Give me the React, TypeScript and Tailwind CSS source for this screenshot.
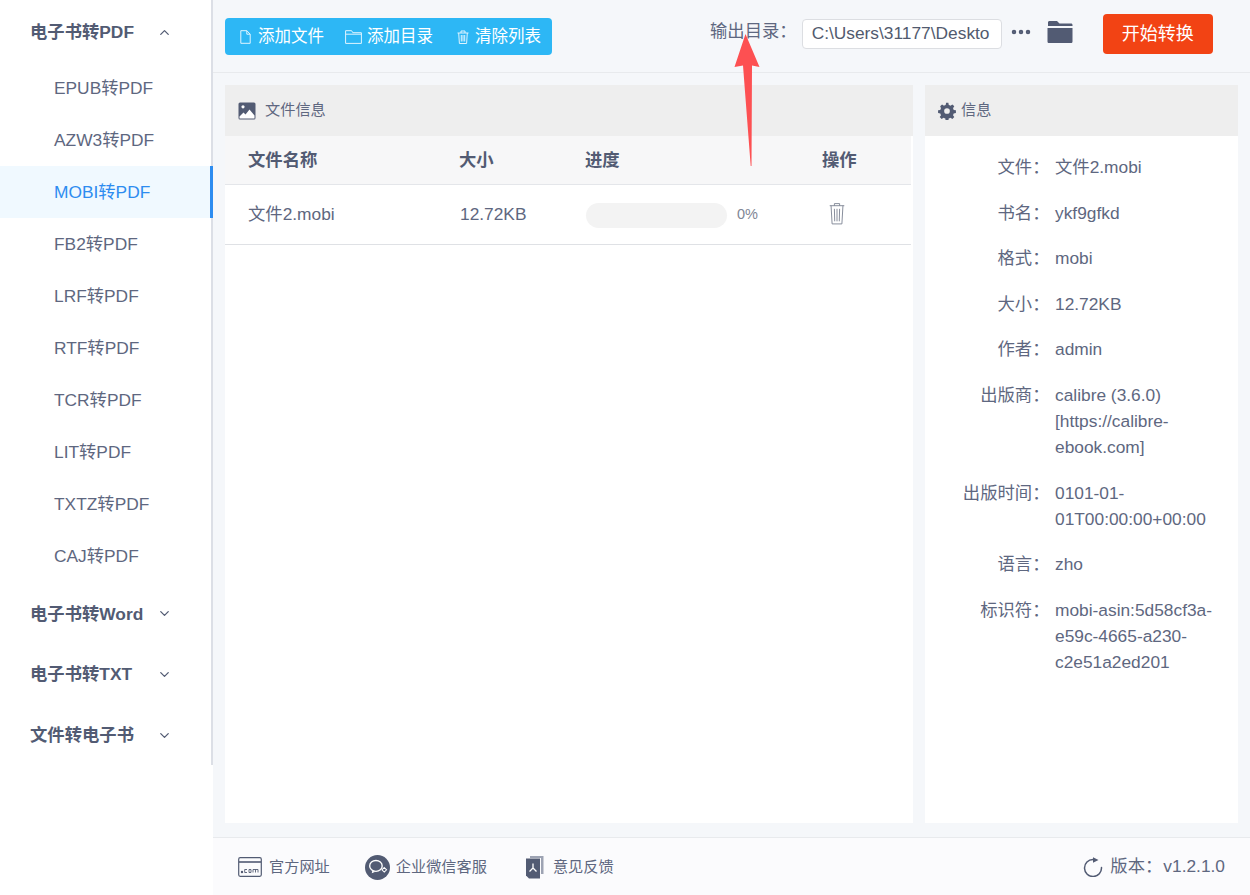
import { ChevronDown, ChevronUp, MoreHorizontal } from 'lucide-react';

const FONT = "font-['Liberation_Sans','Noto_Sans_CJK_SC',sans-serif]";

const subItems = ['EPUB转PDF', 'AZW3转PDF', 'MOBI转PDF', 'FB2转PDF', 'LRF转PDF', 'RTF转PDF', 'TCR转PDF', 'LIT转PDF', 'TXTZ转PDF', 'CAJ转PDF'];

const infoRows = [
  { label: '文件\uFF1A', value: '文件2.mobi', h: 'h-[45.6px]' },
  { label: '书名\uFF1A', value: 'ykf9gfkd', h: 'h-[45.6px]' },
  { label: '格式\uFF1A', value: 'mobi', h: 'h-[45.6px]' },
  { label: '大小\uFF1A', value: '12.72KB', h: 'h-[45.6px]' },
  { label: '作者\uFF1A', value: 'admin', h: 'h-[45.6px]' },
  { label: '出版商\uFF1A', value: 'calibre (3.6.0) [https://calibre-ebook.com]', h: 'h-[97.6px]' },
  { label: '出版时间\uFF1A', value: '0101-01-01T00:00:00+00:00', h: 'h-[71.6px]' },
  { label: '语言\uFF1A', value: 'zho', h: 'h-[45.6px]' },
  { label: '标识符\uFF1A', value: 'mobi-asin:5d58cf3a-e59c-4665-a230-c2e51a2ed201', h: 'h-[97.6px]' },
];

function MenuTitle({ text, open }: { text: string; open?: boolean }) {
  return (
    <div className="flex h-[61px] items-center pl-[30px] pt-[3px] text-[17.33px] font-bold text-[#525b73]">
      <span className="w-[127px] whitespace-nowrap">{text}</span>
      {open ? <ChevronUp className="h-[15px] w-[15px]" /> : <ChevronDown className="-mt-[2px] h-[15px] w-[15px]" />}
    </div>
  );
}

function Sidebar() {
  return (
    <aside className="flex h-[765px] w-[213px] shrink-0 flex-col border-r-2 border-[#dcdfe6] bg-white pt-[1px]">
      <MenuTitle text="电子书转PDF" open />
      <div className="mb-[1px] flex flex-col">
        {subItems.map((item) => {
          const active = item === 'MOBI转PDF';
          return (
            <div
              key={item}
              className={
                active
                  ? 'flex h-[52px] items-center border-r-[3px] border-[#2d8cf0] bg-[#f0f9ff] pl-[54px] pt-[2px] -mr-[2px] text-[17.33px] text-[#2d8cf0]'
                  : 'flex h-[52px] items-center pl-[54px] pt-[2px] text-[17.33px] text-[#5e6780]'
              }
            >
              {item}
            </div>
          );
        })}
      </div>
      <MenuTitle text="电子书转Word" />
      <MenuTitle text="电子书转TXT" />
      <MenuTitle text="文件转电子书" />
    </aside>
  );
}

function Toolbar() {
  return (
    <div className="flex h-[73px] shrink-0 items-center border-b border-[#e8eaed] pl-[12px]">
      <div className="flex h-[37px] w-[327px] items-center rounded-[4px] bg-[#2db7f5] pl-[15px] pt-[1px] text-[16.5px] text-white">
        <svg viewBox="0 0 11 14" className="mr-[7px] h-[14px] w-[11px]" fill="none" stroke="#dff4ff" strokeWidth="1">
          <path d="M.8.7h6l3.400 3.500v9.100H.800zM6.800.7v3.500h3.400" />
        </svg>
        <span>添加文件</span>
        <svg viewBox="0 0 17 14" className="ml-[21px] mr-[5px] h-[14px] w-[17px]" fill="none" stroke="#dff4ff" strokeWidth="1">
          <path d="M.6 13.400V.7h6l1.200 2h8.600v10.700zM.6 4.200h15.800" />
        </svg>
        <span>添加目录</span>
        <svg viewBox="0 0 12 14" className="ml-[24px] mr-[6px] h-[14px] w-[12px]" fill="none" stroke="#dff4ff" strokeWidth="1">
          <path d="M.5 3h11M4 3V1h4v2M1.700 3l.7 10.500h7.200L10.300 3M4.300 5v6.500M6 5v6.500M7.700 5v6.500" />
        </svg>
        <span>清除列表</span>
      </div>
      <div className="mb-[4px] flex items-center">
        <span className="mb-[4px] ml-[158px] whitespace-nowrap text-[17.33px] text-[#5e6780]">{'输出目录\uFF1A'}</span>
        <div className="ml-[5px] flex h-[30px] w-[200px] items-center overflow-hidden whitespace-nowrap rounded-[4px] border border-[#dcdee2] bg-white pl-[9px] text-[17.33px] text-[#515a6e]">
          C:\Users\31177\Deskto
        </div>
        <MoreHorizontal className="mb-[4px] ml-[7px] h-[24px] w-[24px] text-[#525b73]" strokeWidth={2.5} />
        <svg viewBox="0 0 26 24" className="mb-[4px] ml-[14px] h-[24px] w-[26px] text-[#525b73]" fill="currentColor">
          <path d="M1 2.500C1 1.500 1.700 1 2.500 1H10l2.500 2.500H24c1 0 1.500.6 1.500 1.500v1H1zM.5 8h25v13.500c0 1-.7 1.500-1.500 1.500H2c-.8 0-1.500-.5-1.500-1.500z" />
        </svg>
        <button className="ml-[30px] h-[40px] w-[110px] rounded-[4px] bg-[#f24314] text-[18px] text-white">开始转换</button>
      </div>
    </div>
  );
}

function FilePanel() {
  return (
    <section className="flex w-[688px] flex-col bg-white">
      <div className="flex h-[51px] items-center bg-[#eeeeee] pl-[13px] text-[15.2px] text-[#5e6780]">
        <svg viewBox="0 0 18 18" className="h-[18px] w-[18px]">
          <rect x="0.500" y="0.500" width="17" height="17" rx="1.500" fill="#525b73" />
          <circle cx="5" cy="4.800" r="1.600" fill="#fff" />
          <path d="M1.500 16.500v-2L5.500 10.500l2 2L11.500 7.500l5 6v3z" fill="#fff" />
        </svg>
        <span className="ml-[9px]">文件信息</span>
      </div>
      <div className="mr-[2px] flex h-[49px] items-center border-b border-[#e4e6ea] bg-[#f7f7f8] pt-[2px] text-[17.33px] font-bold text-[#525b73]">
        <span className="w-[234px] pl-[23px]">文件名称</span>
        <span className="w-[126px]">大小</span>
        <span className="w-[237px]">进度</span>
        <span>操作</span>
      </div>
      <div className="mr-[2px] flex h-[60px] items-center border-b border-[#dfe1e5] text-[17.33px] text-[#5e6780]">
        <span className="w-[235px] pl-[23px]">文件2.mobi</span>
        <span className="w-[126px]">12.72KB</span>
        <div className="flex w-[236px] items-center pt-[1px]">
          <div className="h-[25px] w-[141px] rounded-full bg-[#f3f3f3]" />
          <span className="ml-[10px] text-[14.5px] text-[#808695]">0%</span>
        </div>
        <svg viewBox="0 0 16 24" className="-mt-[3px] ml-[6px] h-[25px] w-[18px] text-[#808695]" fill="none" stroke="currentColor" strokeWidth="0.900">
          <path d="M1 4.500h14M5.500 4.500V2.500h5v2M2.300 4.500l1 17.500h9.400l1-17.500M5.500 7.500l.3 12M8 7.500v12M10.500 7.500l-.3 12" />
        </svg>
      </div>
    </section>
  );
}

function InfoPanel() {
  return (
    <section className="flex w-[313px] flex-col bg-white">
      <div className="flex h-[51px] items-center bg-[#eeeeee] pl-[13px] text-[15.2px] text-[#5e6780]">
        <svg viewBox="0 0 24 24" className="h-[18px] w-[18px]" fill="#525b73">
          <path d="M13.800 1l.6 3a8.500 8.500 0 0 1 2.200.9l2.600-1.700 2.500 2.500-1.700 2.600c.4.700.7 1.400.9 2.200l3 .6v3.600l-3 .6a8.500 8.500 0 0 1-.9 2.200l1.700 2.600-2.500 2.500-2.600-1.700c-.7.4-1.400.7-2.200.9l-.6 3h-3.600l-.6-3a8.500 8.500 0 0 1-2.200-.9l-2.600 1.700-2.500-2.500 1.700-2.600a8.500 8.500 0 0 1-.9-2.200l-3-.6v-3.600l3-.6c.2-.8.5-1.500.9-2.200L2.900 5.700l2.500-2.500L8 4.900c.7-.4 1.400-.7 2.200-.9l.6-3h3zM12 8.200a3.800 3.800 0 1 0 0 7.600 3.800 3.800 0 0 0 0-7.600z" />
        </svg>
        <span className="ml-[5px]">信息</span>
      </div>
      <div className="flex flex-col pt-[9px] text-[17.33px] leading-[26px] text-[#5e6780]">
        {infoRows.map((row) => (
          <div key={row.label} className={`flex ${row.h} pt-[9px]`}>
            <span className="w-[130px] shrink-0 pr-[5.5px] text-right">{row.label}</span>
            <span className="w-[165px] break-words">{row.value}</span>
          </div>
        ))}
      </div>
    </section>
  );
}

function Footer() {
  return (
    <footer className="flex h-[58px] shrink-0 items-center border-t border-[#e8eaed] bg-[#fbfbfd] pl-[25px] pr-[25px] pt-[1px] text-[15.2px] text-[#5e6780]">
      <svg viewBox="0 0 24 20" className="h-[20px] w-[24px]" fill="none" stroke="#525b73" strokeWidth="1.200">
        <rect x="0.700" y="0.700" width="22.600" height="18.600" rx="1.500" />
        <path d="M1 5h22" strokeWidth="1.600" />
        <circle cx="4" cy="15" r="0.600" fill="#525b73" />
        <path d="M9 12.500H6.700v3H9M11 12.500h2v3h-2zM15 15.500v-3h5v3M17.500 12.500v3" strokeWidth="0.900" />
      </svg>
      <span className="ml-[7px]">官方网址</span>
      <svg viewBox="0 0 24 24" className="ml-[35px] h-[25px] w-[25px]">
        <circle cx="12" cy="12" r="12" fill="#525b73" />
        <ellipse cx="10.500" cy="10.500" rx="6" ry="5.200" fill="none" stroke="#fff" strokeWidth="1.300" />
        <path d="M7 15l-.5 2.500L10 16z" fill="#fff" />
        <path d="M18.500 12l2.200 2.200-2.200 2.200-2.200-2.200z" fill="none" stroke="#fff" strokeWidth="1" />
      </svg>
      <span className="ml-[6px]">企业微信客服</span>
      <svg viewBox="0 0 20 24" className="ml-[38px] h-[24px] w-[20px]">
        <path d="M5 1h13.500v18H16V3H5z" fill="#9da3b3" />
        <path d="M1 3.500h14v20H4l-3-3z" fill="#525b73" />
        <path d="M8 8.500v4.500M8 13l-3.500 3.500M8 13l3.500 3.500" stroke="#fff" strokeWidth="1.300" fill="none" />
      </svg>
      <span className="ml-[8px]">意见反馈</span>
      <div className="ml-auto flex items-center text-[17.33px]">
        <svg viewBox="0 0 20 20" className="mr-[7px] h-[20px] w-[20px]" fill="none" stroke="#525b73" strokeWidth="1.500">
          <path d="M18.500 10.500a8.500 8.500 0 1 1-8.500-8" strokeLinecap="round" />
          <path d="M10 0.200 15.500 3 10 5.800z" fill="#525b73" stroke="none" />
        </svg>
        <span>{'版本\uFF1A'}</span>
        <span className="ml-[1px]">v1.2.1.0</span>
      </div>
    </footer>
  );
}

export default function App() {
  return (
    <div className={`relative flex h-[895px] w-[1250px] overflow-hidden bg-white ${FONT}`}>
      <Sidebar />
      <div className="flex h-full flex-1 flex-col bg-[#f5f7fa]">
        <Toolbar />
        <main className="flex min-h-0 flex-1 gap-[12px] pb-[14px] pl-[12px] pt-[12px]">
          <FilePanel />
          <InfoPanel />
        </main>
        <Footer />
      </div>
      {/* red arrow annotation */}
      <svg viewBox="0 0 30 136" className="absolute left-[732px] top-[32px] h-[136px] w-[30px]">
        <path d="M13.500 2 27.500 35 20 33.500 19.500 134 18.700 134 11 33.500 2.500 35z" fill="#fd5052" />
      </svg>
    </div>
  );
}
